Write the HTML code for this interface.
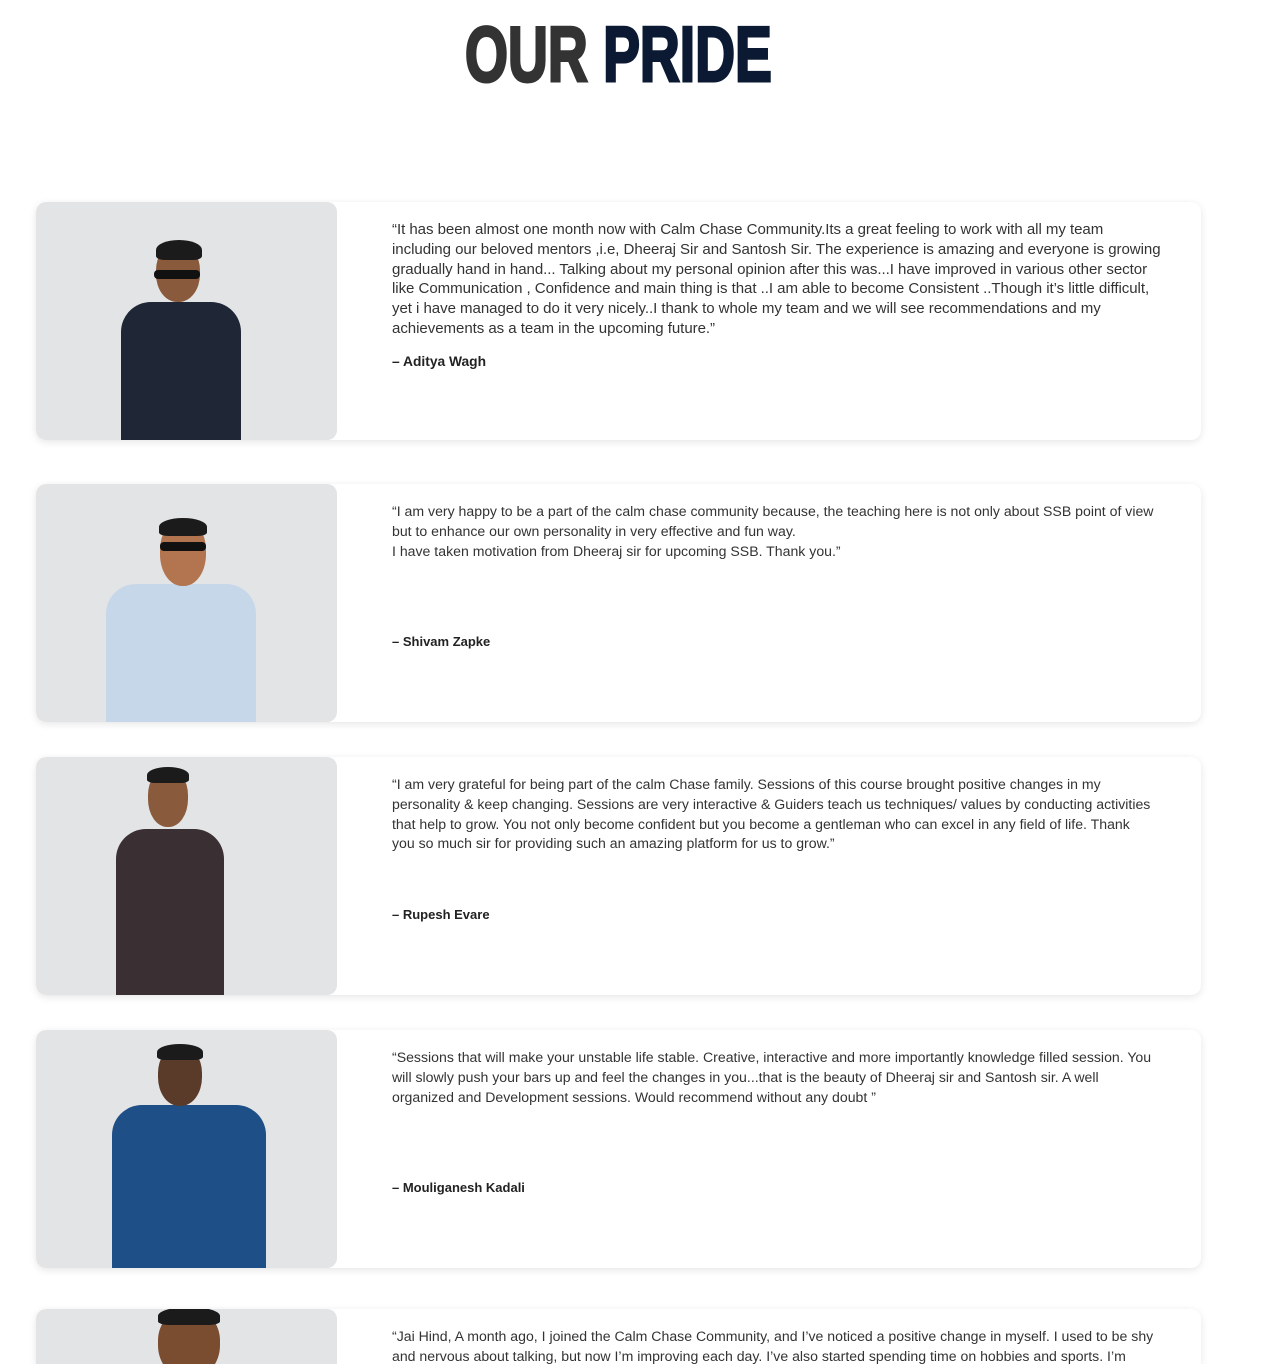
<!DOCTYPE html>
<html><head><meta charset="utf-8"><style>
*{margin:0;padding:0;box-sizing:border-box}
html,body{width:1276px;height:1364px;overflow:hidden}
body{background:#fff;font-family:"Liberation Sans",sans-serif;position:relative}
h1{position:absolute;left:465px;top:14px;width:306px;font-size:78px;font-weight:700;letter-spacing:0px;white-space:nowrap;transform:scaleX(0.708);transform-origin:left top;line-height:80px;-webkit-text-stroke:3px currentColor}
h1 .a{color:#333}h1 .b{color:#0b1a32}
.card{position:absolute;left:36px;width:1165px;height:238px;background:#fff;border-radius:10px;box-shadow:0 2px 8px rgba(0,0,0,.10);overflow:hidden}
.img{position:absolute;left:0;top:0;width:301px;height:238px;background:#e3e4e6;border-radius:10px;overflow:hidden}
.txt{position:absolute;left:356px;top:18px;font-size:14.1px;line-height:19.8px;color:#333;white-space:nowrap}
.c1 .txt{font-size:15.05px;letter-spacing:-0.05px}
.name{position:absolute;left:356px;font-size:13px;font-weight:700;color:#222}
.head{position:absolute;border-radius:45% 45% 48% 48%;background:#8a5a3c}
.hair{position:absolute;border-radius:50% 50% 20% 20%;background:#1b1b1b}
.body{position:absolute;border-radius:30px 30px 0 0}
.gl{position:absolute;height:9px;background:#111;border-radius:4px}
</style></head><body>
<h1><span class="a">OUR</span> <span class="b">PRIDE</span></h1>

<div class="card c1" style="top:202px">
 <div class="img">
  <div class="body" style="left:85px;top:100px;width:120px;height:140px;background:#1f2737"></div>
  <div class="head" style="left:120px;top:42px;width:44px;height:58px"></div>
  <div class="hair" style="left:120px;top:38px;width:46px;height:20px"></div>
  <div class="gl" style="left:118px;top:68px;width:46px"></div>
 </div>
 <div class="txt">“It has been almost one month now with Calm Chase Community.Its a great feeling to work with all my team<br>including our beloved mentors ,i.e, Dheeraj Sir and Santosh Sir. The experience is amazing and everyone is growing<br>gradually hand in hand... Talking about my personal opinion after this was...I have improved in various other sector<br>like Communication , Confidence and main thing is that ..I am able to become Consistent ..Though it’s little difficult,<br>yet i have managed to do it very nicely..I thank to whole my team and we will see recommendations and my<br>achievements as a team in the upcoming future.”</div>
 <div class="name" style="top:152px;font-size:13.8px">– Aditya Wagh</div>
</div>

<div class="card" style="top:484px">
 <div class="img">
  <div class="body" style="left:70px;top:100px;width:150px;height:140px;background:#c6d7ea"></div>
  <div class="head" style="left:124px;top:36px;width:46px;height:66px;background:#b27550"></div>
  <div class="hair" style="left:123px;top:34px;width:48px;height:18px"></div>
  <div class="gl" style="left:124px;top:58px;width:46px"></div>
 </div>
 <div class="txt">“I am very happy to be a part of the calm chase community because, the teaching here is not only about SSB point of view<br>but to enhance our own personality in very effective and fun way.<br>I have taken motivation from Dheeraj sir for upcoming SSB. Thank you.”</div>
 <div class="name" style="top:150px">– Shivam Zapke</div>
</div>

<div class="card" style="top:757px">
 <div class="img">
  <div class="body" style="left:80px;top:72px;width:108px;height:166px;background:#3a2f32"></div>
  <div class="head" style="left:112px;top:12px;width:40px;height:58px"></div>
  <div class="hair" style="left:111px;top:10px;width:42px;height:16px"></div>
 </div>
 <div class="txt">“I am very grateful for being part of the calm Chase family. Sessions of this course brought positive changes in my<br>personality &amp; keep changing. Sessions are very interactive &amp; Guiders teach us techniques/ values by conducting activities<br>that help to grow. You not only become confident but you become a gentleman who can excel in any field of life. Thank<br>you so much sir for providing such an amazing platform for us to grow.”</div>
 <div class="name" style="top:150px">– Rupesh Evare</div>
</div>

<div class="card" style="top:1030px">
 <div class="img">
  <div class="body" style="left:76px;top:75px;width:154px;height:163px;background:#1e4f86"></div>
  <div class="head" style="left:122px;top:16px;width:44px;height:60px;background:#5a3a28"></div>
  <div class="hair" style="left:121px;top:14px;width:46px;height:16px"></div>
 </div>
 <div class="txt">“Sessions that will make your unstable life stable. Creative, interactive and more importantly knowledge filled session. You<br>will slowly push your bars up and feel the changes in you...that is the beauty of Dheeraj sir and Santosh sir. A well<br>organized and Development sessions. Would recommend without any doubt ”</div>
 <div class="name" style="top:150px">– Mouliganesh Kadali</div>
</div>

<div class="card" style="top:1309px;height:55px;border-radius:10px 10px 0 0">
 <div class="img" style="height:55px;border-radius:10px 10px 0 0">
  <div class="head" style="left:122px;top:0px;width:62px;height:70px;background:#7a4c30"></div>
  <div class="hair" style="left:122px;top:-2px;width:62px;height:18px"></div>
 </div>
 <div class="txt">“Jai Hind, A month ago, I joined the Calm Chase Community, and I’ve noticed a positive change in myself. I used to be shy<br>and nervous about talking, but now I’m improving each day. I’ve also started spending time on hobbies and sports. I’m</div>
</div>
</body></html>
